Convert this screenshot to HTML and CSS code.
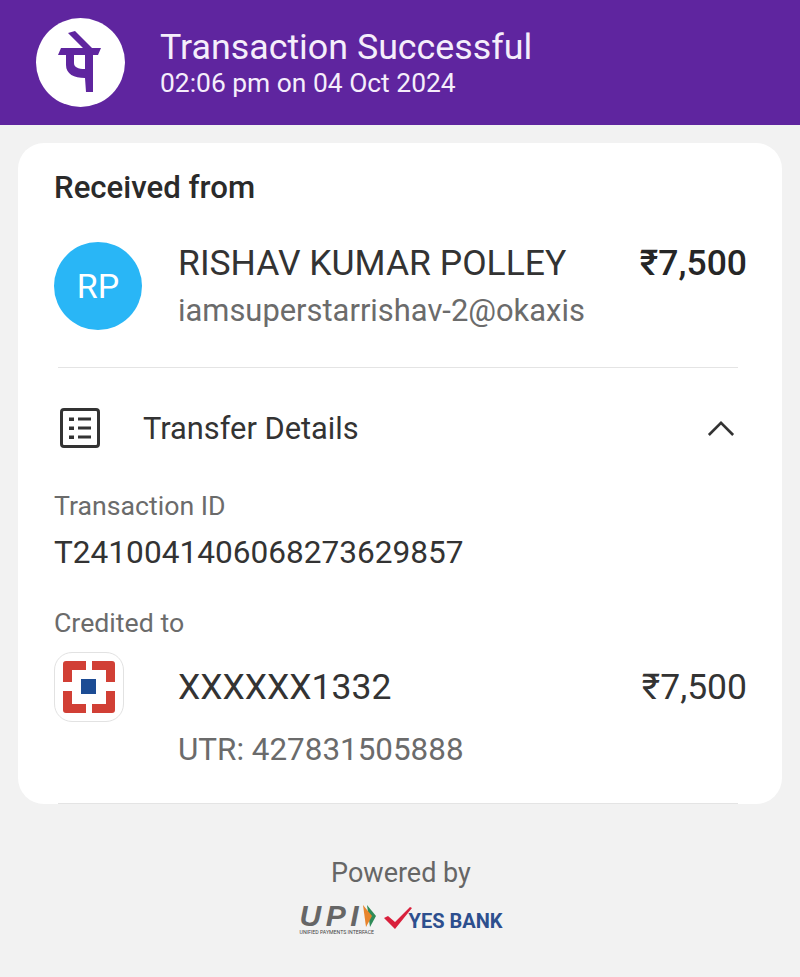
FILE: index.html
```html
<!DOCTYPE html>
<html lang="en">
<head>
    <meta charset="UTF-8">
    <meta name="viewport" content="width=device-width, initial-scale=1.0">
    <title>Transaction Successful</title>
    <link rel="stylesheet" href="styles.css">
</head>
<body>
<header class="top-bar">
    <div class="brand">
        <svg viewBox="0 0 89 89" width="89" height="89">
            <circle cx="44.5" cy="44.5" r="44.5" fill="#fff"/>
            <path fill="#5f259f" d="M32 15 L39 13 L56 30 L65 30 L62 37 L57 37 L57 74 L50 74 L49 60 C38 60 30 56 30 47 L30 37 L22 37 L25 30 L47 30 Z M38 37 L38 45 C38 49 42 51 49 51 L49 37 Z"/>
        </svg>
    </div>
    <div class="top-text">
        <div class="top-title">Transaction Successful</div>
        <div class="top-time">02:06 pm on 04 Oct 2024</div>
    </div>
</header>

<main class="card">
    <h2 class="card-heading">Received from</h2>
    <div class="payer">
        <div class="avatar">RP</div>
        <div class="payer-info">
            <div class="payer-line">
                <span class="payer-name">RISHAV KUMAR POLLEY</span>
                <span class="payer-amount">₹7,500</span>
            </div>
            <div class="payer-vpa">iamsuperstarrishav-2@okaxis</div>
        </div>
    </div>
    <div class="divider"></div>

    <div class="details-head">
        <svg class="list-icon" viewBox="0 0 40 40" width="40" height="40">
            <rect x="1.5" y="1.5" width="37" height="37" rx="2.5" fill="none" stroke="#333" stroke-width="3"/>
            <g fill="#333">
                <rect x="9" y="9.5" width="5" height="3.5"/>
                <rect x="9" y="18.5" width="5" height="3.5"/>
                <rect x="9" y="27.5" width="5" height="3.5"/>
                <rect x="18" y="9.5" width="13" height="3"/>
                <rect x="18" y="18.5" width="13" height="3"/>
                <rect x="18" y="27.5" width="13" height="3"/>
            </g>
        </svg>
        <span class="details-title">Transfer Details</span>
        <svg class="chevron" viewBox="0 0 30 18" width="28" height="17">
            <path d="M2 16 L15 3 L28 16" fill="none" stroke="#333" stroke-width="2.8"/>
        </svg>
    </div>

    <div class="field-label">Transaction ID</div>
    <div class="field-value">T2410041406068273629857</div>
    <div class="field-label credited">Credited to</div>

    <div class="bank-row">
        <div class="bank-icon">
            <svg viewBox="0 0 52 52" width="52" height="52">
                <g fill="#d13f35">
                    <path d="M3 0 H23 V9 H9 V21 H0 V3 Q0 0 3 0 Z"/>
                    <path d="M29 0 H49 Q52 0 52 3 V21 H43 V9 H29 Z"/>
                    <path d="M0 30 H9 V43 H23 V52 H3 Q0 52 0 49 Z"/>
                    <path d="M43 30 H52 V49 Q52 52 49 52 H29 V43 H43 Z"/>
                </g>
                <rect x="18" y="18" width="15" height="15" fill="#1c4c94"/>
            </svg>
        </div>
        <div class="bank-info">
            <div class="bank-line">
                <span>XXXXXX1332</span>
                <span>₹7,500</span>
            </div>
            <div class="bank-utr">UTR: 427831505888</div>
        </div>
    </div>
    <div class="divider card-edge"></div>
</main>

<footer class="powered">
    <div class="powered-text">Powered by</div>
    <div class="powered-logos">
        <div class="upi">
            <div class="upi-mark">
                <span class="upi-word">UPI</span>
                <svg viewBox="0 0 14 22" width="14" height="22">
                    <path d="M4 0 L13 11 L7 22 Z" fill="#2e8b57"/>
                    <path d="M0 0 L9 11 L3 22 Z" fill="#e8842c"/>
                </svg>
            </div>
            <div class="upi-caption">UNIFIED PAYMENTS INTERFACE</div>
        </div>
        <svg class="tick" viewBox="0 0 28 22" width="28" height="22">
            <path d="M0 11 L4 9 L11 15 L26 0 L28 1 L11 22 Z" fill="#d9203c"/>
        </svg>
        <span class="yes-bank">YES BANK</span>
    </div>
</footer>
</body>
</html>
```

FILE: styles.css
```css
body {
    margin: 0;
    background: #f2f2f2;
    font-family: 'Roboto', sans-serif;
    color: #262626;
}
.top-bar {
    height: 125px;
    background: #5f259f;
    display: flex;
    align-items: center;
    padding-left: 36px;
    gap: 35px;
}
.brand {
    width: 89px;
    height: 89px;
}
.brand svg {
    display: block;
}
.top-text {
    color: #f5eefb;
    margin-top: 1px;
}
.top-title {
    font-size: 35.8px;
    line-height: 40px;
}
.top-time {
    font-size: 26.4px;
    line-height: 32px;
}
.card {
    margin: 18px 18px 0;
    height: 661px;
    box-sizing: border-box;
    background: #fff;
    border-radius: 26px;
    padding: 27px 35px 0 36px;
    display: flex;
    flex-direction: column;
}
.card-heading {
    margin: 0;
    font-size: 31.2px;
    font-weight: 500;
    line-height: 36px;
    color: #2a2a2a;
}
.payer {
    display: flex;
    gap: 36px;
    margin-top: 36px;
}
.avatar {
    width: 88px;
    height: 88px;
    flex: none;
    border-radius: 50%;
    background: #29b6f6;
    color: #fff;
    font-size: 34px;
    display: flex;
    align-items: center;
    justify-content: center;
}
.payer-info {
    flex: 1;
    padding-top: 1px;
}
.payer-line,
.bank-line {
    display: flex;
    justify-content: space-between;
    font-size: 35.5px;
    line-height: 40px;
}
.payer-name {
    color: #333;
}
.payer-amount {
    font-weight: 500;
}
.payer-vpa {
    font-size: 30.9px;
    line-height: 36px;
    color: #6b6b6b;
    margin-top: 10px;
}
.divider {
    height: 1px;
    flex: none;
    background: #e4e4e4;
    margin: 37px 9px 0 4px;
}
.divider.card-edge {
    margin-top: auto;
}
.details-head {
    display: flex;
    align-items: center;
    margin-top: 40px;
    padding-left: 6px;
    height: 40px;
}
.details-title {
    font-size: 30.8px;
    margin-left: 43px;
    flex: 1;
    color: #333;
}
.chevron {
    margin-right: 12px;
}
.field-label {
    font-size: 26.7px;
    line-height: 32px;
    color: #6b6b6b;
    margin-top: 42px;
}
.field-value {
    font-size: 31.6px;
    line-height: 36px;
    margin-top: 13px;
    color: #333;
}
.field-label.credited {
    margin-top: 36px;
}
.bank-row {
    display: flex;
    gap: 55px;
    margin-top: 13px;
}
.bank-icon {
    width: 70px;
    height: 70px;
    flex: none;
    box-sizing: border-box;
    border: 1px solid #e2e2e2;
    border-radius: 18px;
    display: flex;
    align-items: center;
    justify-content: center;
}
.bank-info {
    flex: 1;
    margin-left: -1px;
}
.bank-line {
    margin-top: 15px;
    color: #333;
}
.bank-utr {
    font-size: 31.4px;
    line-height: 36px;
    color: #6b6b6b;
    margin-top: 25px;
}
.powered {
    text-align: center;
    padding-left: 2px;
    margin-top: 53px;
}
.powered-text {
    font-size: 27px;
    line-height: 32px;
    color: #666;
}
.powered-logos {
    display: flex;
    justify-content: center;
    align-items: center;
    margin-top: 15px;
}
.upi {
    width: 79px;
    text-align: left;
}
.upi-mark {
    display: flex;
    align-items: center;
    height: 23px;
}
.upi-word {
    font-family: 'Liberation Sans', sans-serif;
    font-size: 30px;
    font-style: italic;
    font-weight: bold;
    color: #666;
    line-height: 23px;
    letter-spacing: 4.5px;
}
.upi-caption {
    font-size: 5.2px;
    line-height: 6px;
    margin-top: 2px;
    white-space: nowrap;
    color: #444;
}
.tick {
    margin-left: 5px;
    margin-top: -3px;
}
.yes-bank {
    font-size: 20px;
    font-weight: 700;
    color: #2d4f8e;
    margin-top: 2px;
    margin-left: -3px;
}
```
